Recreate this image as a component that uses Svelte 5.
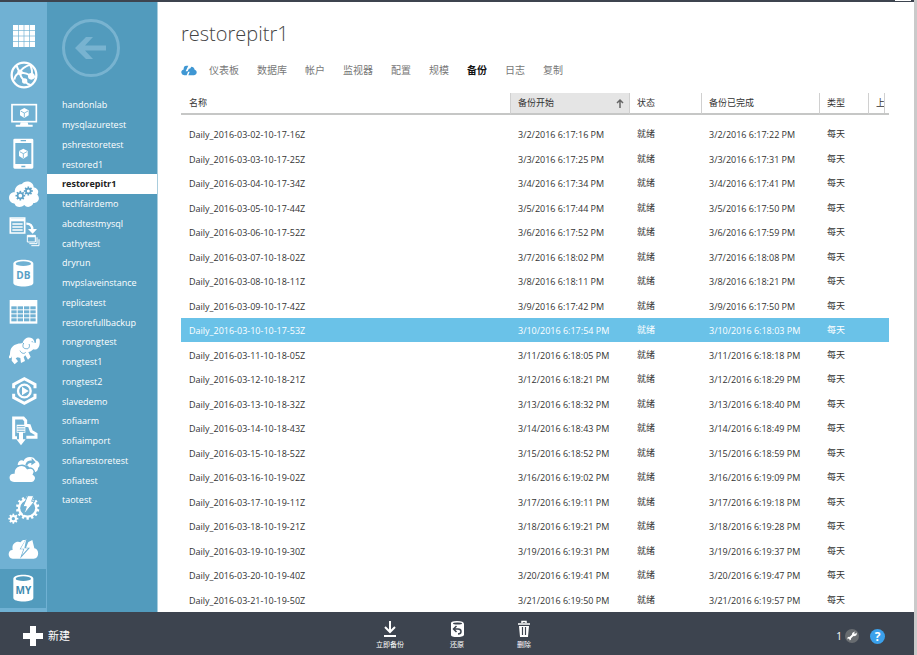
<script>
  const rail = [
    { name: 'All items', art: 'grid' },
    { name: 'Web apps', art: 'globe' },
    { name: 'Virtual machines', art: 'monitor' },
    { name: 'Mobile services', art: 'phone' },
    { name: 'Cloud services', art: 'gearcloud' },
    { name: 'Batch services', art: 'batch' },
    { name: 'SQL databases', art: 'db' },
    { name: 'Storage', art: 'table' },
    { name: 'HDInsight', art: 'elephant' },
    { name: 'Media services', art: 'media' },
    { name: 'Import and export', art: 'import' },
    { name: 'Backup', art: 'clouds' },
    { name: 'Automation', art: 'automation' },
    { name: 'Recovery', art: 'boltcloud' },
    { name: 'MySQL databases', art: 'my' }
  ];

  const cells = [0, 1, 2, 3];
  const teeth = (n) => Array.from({ length: n }, (_, i) => (i * 360) / n);

  const databases = [
    'handonlab', 'mysqlazuretest', 'pshrestoretest', 'restored1', 'restorepitr1', 'techfairdemo',
    'abcdtestmysql', 'cathytest', 'dryrun', 'mvpslaveinstance', 'replicatest', 'restorefullbackup',
    'rongrongtest', 'rongtest1', 'rongtest2', 'slavedemo', 'sofiaarm', 'sofiaimport',
    'sofiarestoretest', 'sofiatest', 'taotest'
  ];
  const current = 'restorepitr1';

  const tabs = ['仪表板', '数据库', '帐户', '监视器', '配置', '规模', '备份', '日志', '复制'];

  const backups = [
    ['02-10-17-16', '3/2/2016 6:17:16', '3/2/2016 6:17:22'],
    ['03-10-17-25', '3/3/2016 6:17:25', '3/3/2016 6:17:31'],
    ['04-10-17-34', '3/4/2016 6:17:34', '3/4/2016 6:17:41'],
    ['05-10-17-44', '3/5/2016 6:17:44', '3/5/2016 6:17:50'],
    ['06-10-17-52', '3/6/2016 6:17:52', '3/6/2016 6:17:59'],
    ['07-10-18-02', '3/7/2016 6:18:02', '3/7/2016 6:18:08'],
    ['08-10-18-11', '3/8/2016 6:18:11', '3/8/2016 6:18:21'],
    ['09-10-17-42', '3/9/2016 6:17:42', '3/9/2016 6:17:50'],
    ['10-10-17-53', '3/10/2016 6:17:54', '3/10/2016 6:18:03'],
    ['11-10-18-05', '3/11/2016 6:18:05', '3/11/2016 6:18:18'],
    ['12-10-18-21', '3/12/2016 6:18:21', '3/12/2016 6:18:29'],
    ['13-10-18-32', '3/13/2016 6:18:32', '3/13/2016 6:18:40'],
    ['14-10-18-43', '3/14/2016 6:18:43', '3/14/2016 6:18:49'],
    ['15-10-18-52', '3/15/2016 6:18:52', '3/15/2016 6:18:59'],
    ['16-10-19-02', '3/16/2016 6:19:02', '3/16/2016 6:19:09'],
    ['17-10-19-11', '3/17/2016 6:19:11', '3/17/2016 6:19:18'],
    ['18-10-19-21', '3/18/2016 6:19:21', '3/18/2016 6:19:28'],
    ['19-10-19-30', '3/19/2016 6:19:31', '3/19/2016 6:19:37'],
    ['20-10-19-40', '3/20/2016 6:19:41', '3/20/2016 6:19:47'],
    ['21-10-19-50', '3/21/2016 6:19:50', '3/21/2016 6:19:57']
  ];
  let selected = $state(8);
</script>

{#snippet gear(cx, cy, r, n, w, tooth)}
  <g transform="translate({cx} {cy})">
    <circle r={r} fill="none" stroke="currentColor" stroke-width={w} />
    {#each teeth(n) as a}
      <rect x={-tooth / 2} y={-r - w / 2 - tooth * 0.8} width={tooth} height={tooth * 1.2} fill="currentColor" transform="rotate({a})" />
    {/each}
  </g>
{/snippet}

{#snippet cube(cx, cy)}
  <g transform="translate({cx} {cy})">
    <path d="M0-15 13-8V7L0 15-13 7V-8Z" fill="#fff" />
    <path d="M-11-6 0 0 11-6M0 0V13" fill="none" stroke="#70b1d3" stroke-width="2.5" />
  </g>
{/snippet}

{#snippet icon(art)}
  <svg class="glyph" viewBox="0 0 96 96" fill="#fff" aria-hidden="true">
    {#if art === 'grid'}
      {#each cells as r}{#each cells as c}
        <rect x={15 + c * 17} y={15 + r * 17} width="15" height="15" />
      {/each}{/each}
    {:else if art === 'globe'}
      <g fill="none" stroke="#fff" stroke-width="6">
        <circle cx="48" cy="48" r="37" stroke-width="7" />
        <path d="M66 17C52 22 40 30 36 40 27 44 20 52 19 62M36 40C32 34 28 29 26 20M36 40C36 54 44 60 50 66 58 76 64 78 70 79M36 40C50 42 62 46 70 51L84 54M70 51C74 40 72 28 66 17" />
      </g>
      <circle cx="36" cy="40" r="8" /><circle cx="50" cy="66" r="8" /><circle cx="70" cy="52" r="10" />
    {:else if art === 'monitor'}
      <rect x="12" y="17" width="73" height="51" fill="none" stroke="#fff" stroke-width="5" />
      {@render cube(49, 42)}
      <path d="M38 70H59L61 77H74V83H23V77H36Z" />
    {:else if art === 'phone'}
      <path fill-rule="evenodd" d="M20 2H72Q76 2 76 6V88Q76 92 72 92H20Q16 92 16 88V6Q16 2 20 2ZM22 15V78H70V15ZM38 6V10H54V6ZM40 83V88H52V83Z" />
      {@render cube(46, 47)}
    {:else if art === 'gearcloud'}
      <path d="M20 77C-4 74-1 42 20 43 20 25 32 19 42 18 47 6 77 7 77 28 92 32 93 42 88 50 98 60 91 76 76 75 73 87 56 91 49 81 40 90 23 89 20 77Z" />
      <g color="#5fa3c8">
        {@render gear(37, 53, 8, 8, 5, 5)}
        {@render gear(61, 39, 7, 8, 5, 5)}
      </g>
    {:else if art === 'batch'}
      <g fill="none" stroke="#fff">
        <path d="M7 3H50V48H7Z" stroke-width="5" />
        <path d="M7 9H50" stroke-width="8" />
        <path d="M13 21H44M13 30H44M13 39H44" stroke-width="4" />
        <path d="M55 20Q73 20 73 38" stroke-width="7" />
        <path d="M58 55H82V75H58ZM64 80H87V61M70 86H93V67" stroke-width="3" />
      </g>
      <path d="M60 36H87L74 50ZM58 55H82V61H58Z" />
    {:else if art === 'db' || art === 'my'}
      <path d="M16 20V78C16 92 76 92 76 78V20C76 4 16 4 16 20Z" />
      <ellipse cx="46" cy="20" rx="23" ry="7" fill={art === 'my' ? '#529bbd' : '#70b1d3'} />
      <text x="46" y="66" text-anchor="middle" class="drum" fill={art === 'my' ? '#3e8bb0' : '#58a0c6'}>{art === 'my' ? 'MY' : 'DB'}</text>
    {:else if art === 'table'}
      <rect x="5" y="12" width="83" height="71" />
      {#each cells as c}{#each cells as r}
        <rect x={10 + c * 19} y={31 + r * 12} width="16" height="9" fill="#70b1d3" />
      {/each}{/each}
    {:else if art === 'elephant'}
      <path d="M3 64C9 59 3 48 12 37 21 25 35 26 44 24 47 10 62 4 72 10 76 12 79 18 80 24 85 25 84 18 84 14 87 9 94 10 95 15 97 36 88 46 76 43 71 48 66 51 61 51L68 66 60 74 52 61 47 66 51 78 39 84 37 69 29 67 23 70 30 79 20 88 11 77 12 63C11 69 7 71 3 69Z" />
      <path d="M47 24C42 36 46 41 55 41 62 43 67 34 63 27M36 47C40 55 48 58 53 52M71 20Q74 19 75 22" fill="none" stroke="#70b1d3" stroke-width="3" />
    {:else if art === 'media'}
      <g fill="none" stroke="#fff" stroke-width="9">
        <path d="M17 40V28L49 11 81 28V40M17 56V68L49 85 81 68V56" />
        <circle cx="49" cy="48" r="19" stroke-width="7" />
      </g>
      <path d="M42 35 62 48 42 61Z" />
    {:else if art === 'import'}
      <path d="M27 71H17V12H46L53 20V34L64 35 70 52 84 60V70H55" fill="none" stroke="#fff" stroke-width="9" />
      <path d="M26 32H52V56H45V76H53L39 94 25 76H33V56H26Z" />
      <path d="M28 38H50M28 45H50M28 52H50" stroke="#70b1d3" stroke-width="3" />
    {:else if art === 'clouds'}
      <path d="M29 33C29 21 41 16 47 21 51 5 79 5 83 19 95 23 98 36 90 42 91 52 81 57 72 54L60 35Z" />
      <path d="M18 86C-3 85-2 56 18 57 18 34 48 26 58 44 73 37 84 51 76 61 90 70 80 87 69 86Z" stroke="#70b1d3" stroke-width="4" />
      <path d="M52 32C57 20 64 19 71 20V12L83 25 70 34V27Q60 26 57 36Z" fill="#70b1d3" />
    {:else if art === 'automation'}
      <g color="#fff">
        {@render gear(59, 45, 26, 14, 7, 7)}
        {@render gear(16, 77, 8, 8, 6, 5)}
      </g>
      <path d="M59 8H77L71 25H80L47 65 55 41H45Z" stroke="#70b1d3" stroke-width="3" />
    {:else if art === 'boltcloud'}
      <path d="M14 77C-3 75-1 50 14 51 10 32 25 22 38 28 45 16 58 23 60 28L73 21 79 46C94 47 95 76 77 77Z" />
      <path d="M56 15 35 49H46L36 77 66 44H54L63 22Z" fill="#70b1d3" />
      <path d="M55 17 38 47H49L42 66 60 46H49Z" />
    {/if}
  </svg>
{/snippet}

<div class="portal">
  <div class="topbar"><span></span></div>
  <div class="body">
    <nav class="rail" aria-label="Services">
      {#each rail as item}
        <a href="#{item.art}" class:active={item.art === 'my'} aria-label={item.name}>{@render icon(item.art)}</a>
      {/each}
    </nav>
    <nav class="list" aria-label="Databases">
      <button class="back" aria-label="Back">
        <svg viewBox="0 0 60 60" aria-hidden="true">
          <circle cx="30" cy="30" r="27.5" fill="none" stroke="#78b3d0" stroke-width="3" />
          <path d="M14 30 25 19H32L24 27.500H45V32.500H24L32 41H25Z" fill="#78b3d0" />
        </svg>
      </button>
      <ul>
        {#each databases as db}
          <li><a href="#{db}" class:current={db === current}>{db}</a></li>
        {/each}
      </ul>
    </nav>
    <main>
      <h1>{current}</h1>
      <nav class="tabs" aria-label="Sections">
        <a href="#start" aria-label="Quick start">
          <svg class="quick" viewBox="0 0 48 32" fill="#3f97d3" aria-hidden="true">
            <path d="M16 2Q7 3 8 13Q0 15 1 23Q2 30 10 30H17L22 18H14L22 2Z" />
            <path d="M24 10 19 20H26L22 30H39Q48 29 47 20Q46 15 41 14Q39 5 31 5L27 11Z" />
          </svg>
        </a>
        {#each tabs as tab}
          <a href="#{tab}" class:on={tab === '备份'}>{tab}</a>
        {/each}
      </nav>
      <table>
        <colgroup>
          <col /><col class="w-start" /><col class="w-status" /><col class="w-end" /><col class="w-type" /><col class="w-more" />
        </colgroup>
        <thead>
          <tr>
            <th>名称</th>
            <th class="sorted">
              <div>备份开始
                <svg viewBox="0 0 8 10" aria-hidden="true"><path d="M4 10V2M1 5 4 2 7 5" fill="none" stroke="#666" stroke-width="1.500" /></svg>
              </div>
            </th>
            <th>状态</th>
            <th>备份已完成</th>
            <th>类型</th>
            <th class="more"><div>上</div></th>
          </tr>
        </thead>
        <tbody>
          {#each backups as [id, start, end], i}
            <tr class:selected={i === selected} onclick={() => (selected = i)}>
              <td>Daily_2016-03-{id}Z</td>
              <td>{start} PM</td>
              <td class="han">就绪</td>
              <td>{end} PM</td>
              <td class="han">每天</td>
              <td></td>
            </tr>
          {/each}
        </tbody>
      </table>
    </main>
  </div>
  <footer>
    <button class="new">
      <svg viewBox="0 0 20 20" aria-hidden="true"><path d="M7 0H13V7H20V13H13V20H7V13H0V7H7Z" fill="#fff" /></svg>
      新建
    </button>
    <div class="commands">
      <button>
        <svg viewBox="0 0 18 18" aria-hidden="true"><path d="M9 1V11M4 7 9 12 14 7M3 16H15" fill="none" stroke="#fff" stroke-width="2" /></svg>
        立即备份
      </button>
      <button>
        <svg viewBox="0 0 18 18" aria-hidden="true">
          <path d="M3 4V15Q3 17 9 17T16 15V4Q16 1 9 1T3 4Z" fill="#fff" />
          <ellipse cx="9.500" cy="3.500" rx="4.500" ry="1" fill="#3d444f" />
          <path d="M5 9H10Q13 9 13 11.500T10 14M8.500 6 5.500 9 8.500 12" fill="none" stroke="#3d444f" stroke-width="1.500" />
        </svg>
        还原
      </button>
      <button>
        <svg viewBox="0 0 18 18" aria-hidden="true">
          <path d="M7 3V1.500H11V3M3 4H15" fill="none" stroke="#fff" stroke-width="1.500" />
          <path d="M4 6H14L13 17H5Z" fill="#fff" />
          <path d="M7.500 7V15M10.500 7V15" stroke="#3d444f" stroke-width="1.200" />
        </svg>
        删除
      </button>
    </div>
    <div class="status">
      <button class="jobs">1
        <svg viewBox="0 0 14 14" aria-hidden="true">
          <circle cx="7" cy="7" r="7" fill="#686c70" />
          <path d="M4 10 9 5" stroke="#fff" stroke-width="2" />
          <path d="M10.500 2.500 9 4 10 5 11.500 3.500Q12.500 6 10 7 7.500 7.500 7 6 6.500 3 10.500 2.500ZM2.500 8.500Q4 7 5.500 8.500 7 10.500 4.500 11.500L5 9.500 4 9 2.500 10.500Z" fill="#fff" />
        </svg>
      </button>
      <button class="help" aria-label="Help">?</button>
    </div>
  </footer>
</div>

<style>
  :global(body) {
    background: #cacaca;
  }
  .portal {
    display: flex;
    flex-direction: column;
    min-height: 100vh;
    margin-right: 3px;
    background: #fff;
    color: #333;
    font: 9px/12px 'Open Sans', 'Noto Sans CJK SC', sans-serif;
  }
  a {
    color: inherit;
    text-decoration: none;
  }
  button {
    border: 0;
    padding: 0;
    background: none;
    color: #fff;
    font: inherit;
    cursor: pointer;
  }
  svg {
    display: block;
  }
  .topbar {
    display: flex;
    justify-content: flex-end;
    height: 2px;
    padding-right: 3px;
    background: #3d444f;
  }
  .topbar span {
    width: 16px;
    height: 1px;
    background: #fff;
  }
  .body {
    display: flex;
    flex: 1;
  }
  .rail {
    display: flex;
    flex-direction: column;
    width: 47px;
    padding: 14px 0 4px;
    box-sizing: border-box;
    background: #70b1d3;
  }
  .rail a {
    display: flex;
    flex: 1;
    align-items: center;
    padding-left: 8px;
    margin-right: 1px;
  }
  .rail .active {
    background: #529bbd;
  }
  .glyph {
    width: 32px;
    height: 32px;
  }
  .drum {
    font: 700 30px 'Open Sans', sans-serif;
  }
  .list {
    width: 111px;
    background: #529bbd;
    border-right: 1px solid #a9cddd;
    box-sizing: border-box;
    color: #fff;
  }
  .back {
    display: block;
    margin: 16px 0 16px 14px;
  }
  .back svg {
    width: 60px;
    height: 60px;
  }
  ul {
    margin: 0;
    padding: 1px 0 0;
    list-style: none;
  }
  li a {
    display: block;
    padding-left: 15px;
    line-height: 20px;
  }
  li:nth-child(4n) a {
    line-height: 19px;
  }
  .current {
    background: #fff;
    color: #222;
    font-weight: 700;
  }
  main {
    flex: 1;
    min-width: 0;
    padding: 16px 25px 0 23px;
  }
  h1 {
    margin: 0;
    color: #444;
    font-size: 20px;
    font-weight: 300;
    line-height: 32px;
  }
  .tabs {
    display: flex;
    align-items: center;
    gap: 18px;
    margin-top: 12px;
    color: #777;
    font-size: 10px;
    line-height: 16px;
    white-space: nowrap;
  }
  .tabs a:first-child {
    margin-right: -6px;
  }
  .quick {
    width: 16px;
    height: 11px;
  }
  .tabs .on {
    color: #111;
    font-weight: 700;
  }
  table {
    width: 100%;
    margin-top: 15px;
    border-collapse: separate;
    border-spacing: 0;
    table-layout: fixed;
  }
  .w-start { width: 119px; }
  .w-status { width: 72px; }
  .w-end { width: 118px; }
  .w-type { width: 49px; }
  .w-more { width: 21px; }
  th,
  td {
    padding: 0 0 0 8px;
    box-sizing: border-box;
    text-align: left;
    white-space: nowrap;
    overflow: hidden;
  }
  th {
    height: 22px;
    border-bottom: 2px solid #c6c7c6;
    font-weight: 400;
  }
  th:not(:first-child) {
    padding-left: 7px;
    border-left: 1px solid #d0d0d0;
  }
  .sorted {
    background: #e5e5e5;
  }
  .sorted div {
    display: flex;
    align-items: center;
    justify-content: space-between;
    padding-right: 5px;
  }
  .sorted svg {
    width: 8px;
    height: 10px;
  }
  .more div {
    width: 8px;
    height: 20px;
    border-right: 1px solid #d0d0d0;
    line-height: 20px;
    overflow: hidden;
  }
  tbody::before {
    content: '';
    display: block;
    height: 7px;
  }
  td {
    height: 24px;
    padding-top: 2px;
  }
  tr:nth-child(even) td {
    height: 25px;
  }
  td.han {
    padding-top: 0;
  }
  .selected {
    background: #6ac2e8;
    color: #fff;
  }
  footer {
    display: grid;
    grid-template-columns: 1fr auto 1fr;
    align-items: center;
    height: 43px;
    background: #3d444f;
  }
  .new {
    display: flex;
    align-items: center;
    gap: 5px;
    padding: 4px 0 0 23px;
    font-size: 11px;
  }
  .new svg {
    width: 20px;
    height: 20px;
  }
  .commands {
    display: flex;
    gap: 27px;
  }
  .commands button {
    display: flex;
    flex-direction: column;
    align-items: center;
    width: 40px;
    padding-top: 4px;
    font-size: 7px;
    line-height: 14px;
    white-space: nowrap;
  }
  .commands svg {
    width: 18px;
    height: 18px;
  }
  .status {
    display: flex;
    justify-content: flex-end;
    align-items: center;
    gap: 11px;
    padding: 5px 29px 0 0;
  }
  .jobs {
    display: flex;
    align-items: center;
    gap: 3px;
    font-size: 10px;
  }
  .jobs svg {
    width: 14px;
    height: 14px;
  }
  .help {
    width: 15px;
    height: 15px;
    border-radius: 50%;
    background: #3ba1ec;
    font-size: 12px;
    font-weight: 700;
    line-height: 15px;
  }
</style>
